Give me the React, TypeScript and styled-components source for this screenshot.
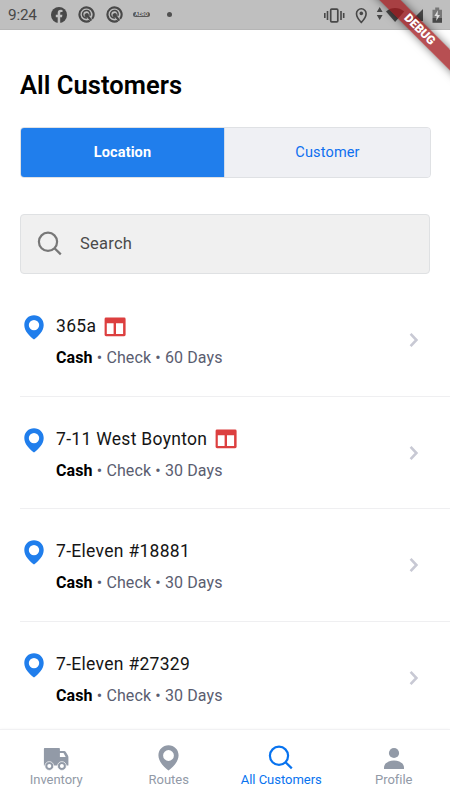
import React from "react";
import styled, { createGlobalStyle } from "styled-components";

const GlobalStyle = createGlobalStyle`
  * { box-sizing: border-box; }
  body { margin: 0; background: #fff; font-family: Roboto, sans-serif; overflow: hidden; }
  svg { display: block; flex: none; }
`;

const Screen = styled.div`
  position: relative;
  width: 450px;
  height: 800px;
  display: flex;
  flex-direction: column;
  overflow: hidden;
  background: #fff;
`;

const StatusBar = styled.header`
  flex: none;
  height: 30px;
  padding: 0 3px 0 8px;
  display: flex;
  align-items: center;
  justify-content: space-between;
  background: #bfbfbf;
  border-bottom: 1px solid #b5b5b5;
  color: #484848;
`;

const StatusGroup = styled.div<{ $gap: number }>`
  display: flex;
  align-items: center;
  gap: ${(p) => p.$gap}px;
`;

const Clock = styled.span`
  width: 32px;
  font-size: 15.3px;
  line-height: 20px;
  letter-spacing: -0.2px;
  white-space: nowrap;
  padding-top: 1px;
`;

const CarrierBadge = styled.span`
  width: 17px;
  height: 5px;
  margin-left: -1px;
  border-radius: 3px;
  background: #5a5a5a;
  color: #d0d0d0;
  font-size: 5px;
  line-height: 5px;
  font-weight: 700;
  text-align: center;
`;

const Dot = styled.span`
  width: 5px;
  height: 5px;
  margin-left: 6px;
  border-radius: 50%;
  background: #505050;
`;

const DebugRibbon = styled.div`
  position: absolute;
  z-index: 3;
  top: 22px;
  left: 357px;
  width: 125px;
  height: 15px;
  transform: rotate(45deg);
  background: rgba(160, 24, 28, 0.76);
  box-shadow: 0 0 9px rgba(0, 0, 0, 0.5);
  color: #fff;
  font-size: 12px;
  font-weight: 900;
  line-height: 15px;
  text-align: center;
`;

const Main = styled.main`
  flex: 1;
  min-height: 0;
  overflow: hidden;
`;

const Title = styled.h1`
  margin: 40px 0 0 20px;
  font-size: 25.5px;
  line-height: 30px;
  font-weight: 600;
  letter-spacing: 0.06px;
  color: #000;
`;

const Tabs = styled.div`
  display: grid;
  grid-template-columns: 204px 1fr;
  width: 411px;
  height: 51px;
  margin: 27px 0 0 20px;
  border: 1px solid #dfe1e4;
  border-radius: 4px;
  background: #eff0f4;
  overflow: hidden;
`;

const Tab = styled.button<{ $active?: boolean }>`
  border: 0;
  border-right: ${(p) => (p.$active ? "1px solid #cfdced" : "0")};
  padding: 0;
  background: ${(p) => (p.$active ? "#207eec" : "#eff0f4")};
  color: ${(p) => (p.$active ? "#fff" : "#0d6ff0")};
  font: ${(p) => (p.$active ? 700 : 400)} 14.5px/20px Roboto, sans-serif;
  letter-spacing: ${(p) => (p.$active ? 0.12 : 0.15)}px;
`;

const SearchBox = styled.div`
  display: flex;
  align-items: center;
  gap: 17px;
  width: 410px;
  height: 60px;
  margin: 36px 0 0 20px;
  padding-left: 16px;
  border: 1px solid #dfe1e3;
  border-radius: 4px;
  background: #f0f0f0;
  color: #4a4a4a;
  font-size: 16.5px;
  line-height: 20px;
  letter-spacing: 0.25px;
`;

const List = styled.div`
  padding-top: 10px;
`;

const Row = styled.article`
  display: grid;
  grid-template-columns: 32px 1fr 21px;
  height: 112.5px;
  margin-left: 20px;
  padding: 31px 20px 0 4px;
  border-bottom: 1px solid #efeff1;
`;

const RowText = styled.div`
  display: flex;
  flex-direction: column;
`;

const NameLine = styled.div`
  display: flex;
  align-items: center;
  gap: 8px;
  height: 22px;
  color: #151515;
  font-size: 17.5px;
  line-height: 22px;
  letter-spacing: 0.3px;
`;

const TableSlot = styled.span`
  padding-top: 1px;
`;

const Terms = styled.div`
  margin-top: 10.4px;
  font-size: 16px;
  line-height: 22px;
  letter-spacing: 0.12px;
  color: #5a5d70;
`;

const Cash = styled.strong`
  color: #000;
  font-weight: 700;
`;

const ChevronSlot = styled.div`
  padding-top: 17px;
`;

const BottomNav = styled.nav`
  flex: none;
  height: 71px;
  display: grid;
  grid-template-columns: repeat(4, 1fr);
  border-top: 1px solid #f1f1f3;
  background: #fff;
  box-shadow: 0 -1px 2px rgba(0, 0, 0, 0.025);
  z-index: 1;
`;

const NavItem = styled.div<{ $active?: boolean }>`
  display: flex;
  flex-direction: column;
  align-items: center;
  padding-top: 15px;
  color: ${(p) => (p.$active ? "#0873ef" : "#929aa7")};
  font-size: 13px;
  line-height: 17px;
  letter-spacing: -0.02px;
`;

const NavIcon = styled.div`
  height: 26px;
`;

const Pin = ({ color, width = 20, height = 25 }: { color: string; width?: number; height?: number }) => (
  <svg width={width} height={height} viewBox="0 0 20 25">
    <path fillRule="evenodd" fill={color} d="M10 .3C4.5.3.3 4.5.3 9.9c0 6.2 5.3 11.2 9.7 14.6 4.4-3.4 9.7-8.4 9.7-14.6C19.7 4.5 15.5.3 10 .3Zm0 4.6a5.2 5.2 0 1 1 0 10.4 5.2 5.2 0 0 1 0-10.4Z" />
  </svg>
);

const SearchIcon = ({ color }: { color: string }) => (
  <svg width="26" height="26" viewBox="0 0 26 26" fill="none" stroke={color} strokeWidth="2.2">
    <circle cx="11" cy="10.8" r="9.1" />
    <path d="m17.3 17 6.5 6.4" />
  </svg>
);

const TableIcon = () => (
  <svg width="22" height="20" viewBox="0 0 22 20">
    <rect x=".6" y=".5" width="21" height="18.7" rx="1.4" fill="#dc3f3f" />
    <path fill="#fff" d="M2.8 6.2h6.8v10.9H2.8zM12 6.2h7.1v10.9H12z" />
  </svg>
);

const Chevron = () => (
  <svg width="12" height="16" viewBox="0 0 12 16" fill="none" stroke="#c8c9d4" strokeWidth="2.6">
    <path d="m1.6 1.9 5.8 6.1-5.8 6.1" />
  </svg>
);

const Truck = () => (
  <svg width="26" height="26" viewBox="0 0 26 26" fill="#929aa7">
    <path fillRule="evenodd" d="M1.8 3h14c.7 0 1.1.4 1.1 1v2h4.3c.7 0 1.2.3 1.6.9l2 3.3c.4.7.6 1.1.6 1.8v8.4H.9V4.2C.9 3.5 1.2 3 1.8 3Zm15.1 5v4h5.8l-2.2-4Z" />
    <g stroke="#fff" strokeWidth=".7">
      <circle cx="6.3" cy="21" r="4.4" />
      <circle cx="18.9" cy="21" r="4.4" />
    </g>
    <circle cx="6.3" cy="21" r="2" fill="#fff" />
    <circle cx="18.9" cy="21" r="2" fill="#fff" />
  </svg>
);

const Profile = () => (
  <svg width="22" height="25" viewBox="0 0 22 25" fill="#929aa7">
    <circle cx="11" cy="8" r="5.1" />
    <path d="M1 24v-1.4c0-4 4-7.2 10-7.2s10 3.2 10 7.2V24Z" />
  </svg>
);

const Facebook = () => (
  <svg width="16" height="16" viewBox="0 0 16 16">
    <circle cx="8" cy="8" r="8" fill="#484848" />
    <path fill="#bfbfbf" d="M6.7 16v-5.8H4.8V7.8h1.9V6c0-2.1 1.2-3.2 3.1-3.2l1.7.1v2h-1c-1 0-1.3.5-1.3 1.2v1.7h2.2l-.4 2.4H9.2V16Z" />
  </svg>
);

const SwirlIcon = () => (
  <svg width="17" height="17" viewBox="0 0 17 17" fill="none" stroke="#484848">
    <path strokeWidth="2.1" d="M14.1 12.9a7.1 7.1 0 1 0-2.3 1.9" />
    <path strokeWidth="1.5" d="M11.8 9.9a3.8 3.8 0 1 0-2.7 2.1" />
    <path fill="#484848" stroke="none" d="M8.2 7.2a1.9 1.9 0 0 1 2.6 2.2l3.3 4.6-1.5 1.2-3.8-4.1a1.9 1.9 0 0 1-.6-3.9Z" />
  </svg>
);

const SystemIcons = () => (
  <svg width="124" height="20" viewBox="0 0 124 20" fill="none" stroke="#484848">
    <rect x="7.7" y="4.2" width="7.1" height="12.6" rx="1" strokeWidth="1.7" />
    <path strokeWidth="1.6" d="M1.8 8v5M4.5 6v9M18 6v9M20.7 8v5" />
    <path strokeWidth="1.6" d="M38.3 3.8a4.8 4.8 0 0 0-4.8 4.9c0 3.7 4.8 8.7 4.8 8.7s4.8-5 4.8-8.7a4.8 4.8 0 0 0-4.8-4.9Z" />
    <circle cx="38.3" cy="8.4" r="1.8" fill="#484848" stroke="none" />
    <g fill="#484848" stroke="none">
      <path d="m56.7 2 2.9 5h-5.8ZM53.8 10h5.8l-2.9 5Z" />
      <path d="M63 6.5c5.2-4.6 13-4.6 18.2 0L72.1 17Z" />
      <path d="M88 16h12V4Z" />
      <path fill="#777" d="M109.5 4.7h2.7V2.5h4v2.2h2.8V13h-9.5Z" />
      <path d="M109.5 13h9.5v4.8h-9.5Z" />
      <path fill="#dcdcdc" d="m114.9 5.3-3.5 5.8h2.3l-.5 5 3.8-6h-2.4Z" />
    </g>
  </svg>
);

const customers = [
  { name: "365a", days: 60, table: true },
  { name: "7-11 West Boynton", days: 30, table: true },
  { name: "7-Eleven #18881", days: 30, table: false },
  { name: "7-Eleven #27329", days: 30, table: false },
];

export default function App() {
  return (
    <Screen>
      <GlobalStyle />
      <StatusBar>
        <StatusGroup $gap={11}>
          <Clock>9:24</Clock>
          <Facebook />
          <SwirlIcon />
          <SwirlIcon />
          <CarrierBadge>AERO</CarrierBadge>
          <Dot />
        </StatusGroup>
        <StatusGroup $gap={0}><SystemIcons /></StatusGroup>
      </StatusBar>
      <DebugRibbon>DEBUG</DebugRibbon>
      <Main>
        <Title>All Customers</Title>
        <Tabs>
          <Tab $active>Location</Tab>
          <Tab>Customer</Tab>
        </Tabs>
        <SearchBox><SearchIcon color="#777" />Search</SearchBox>
        <List>
          {customers.map((customer) => (
            <Row key={customer.name}>
              <Pin color="#207eec" />
              <RowText>
                <NameLine>
                  {customer.name}
                  {customer.table && <TableSlot><TableIcon /></TableSlot>}
                </NameLine>
                <Terms><Cash>Cash</Cash> • Check • {customer.days} Days</Terms>
              </RowText>
              <ChevronSlot><Chevron /></ChevronSlot>
            </Row>
          ))}
        </List>
      </Main>
      <BottomNav>
        <NavItem><NavIcon><Truck /></NavIcon>Inventory</NavItem>
        <NavItem><NavIcon><Pin color="#929aa7" width={21} height={26} /></NavIcon>Routes</NavItem>
        <NavItem $active><NavIcon><SearchIcon color="#0873ef" /></NavIcon>All Customers</NavItem>
        <NavItem><NavIcon><Profile /></NavIcon>Profile</NavItem>
      </BottomNav>
    </Screen>
  );
}
